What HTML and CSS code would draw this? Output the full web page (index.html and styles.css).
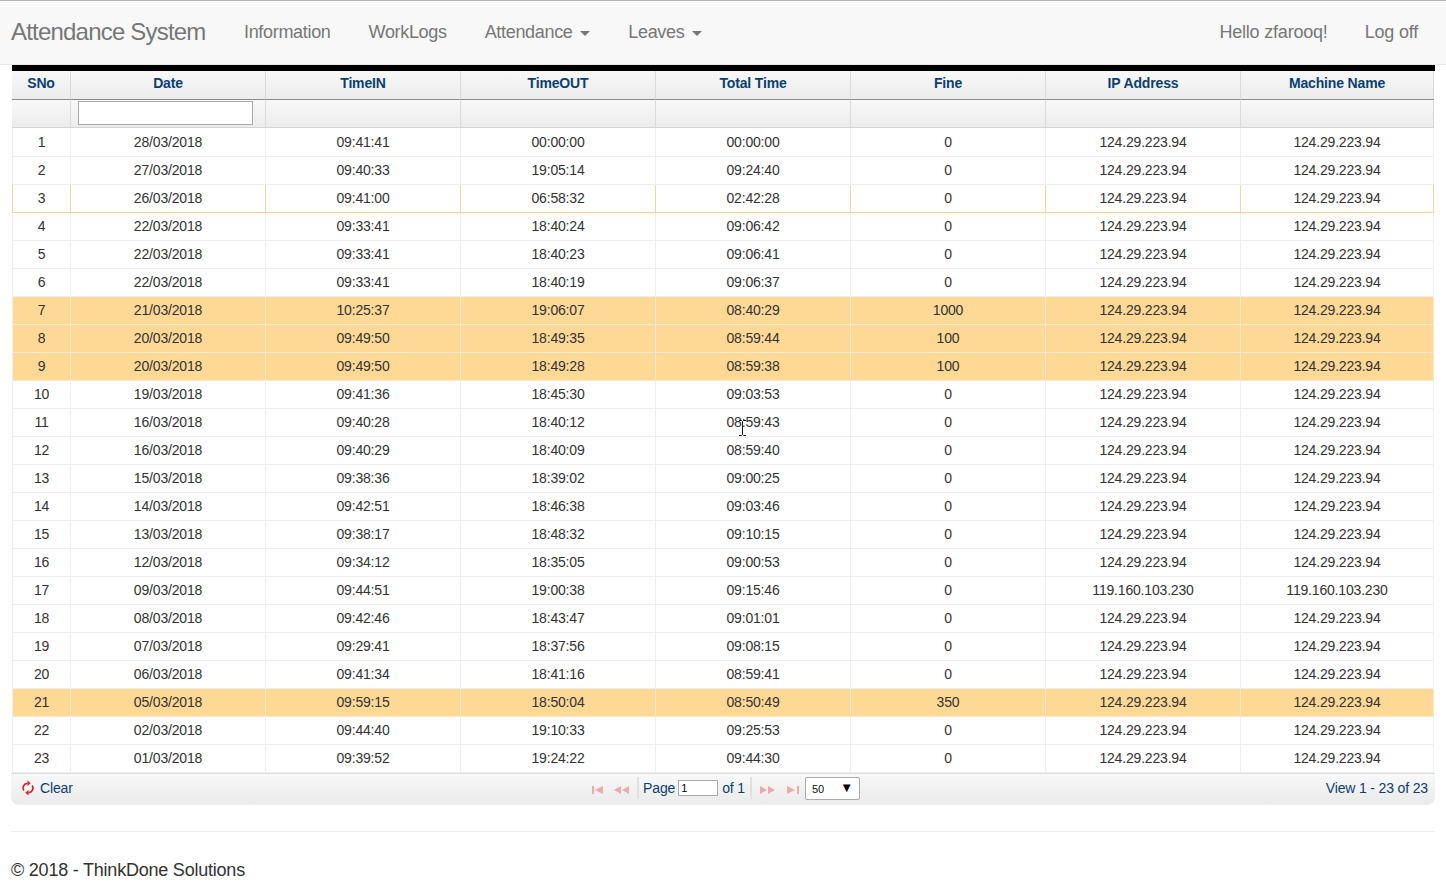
FILE: index.html
```html
<!DOCTYPE html>
<html lang="en">
<head>
    <meta charset="UTF-8">
    <title>Attendance System</title>
    <link rel="stylesheet" href="styles.css">
</head>
<body>
    <nav class="navbar">
        <a class="brand">Attendance System</a>
        <ul class="nav-links">
            <li>Information</li>
            <li>WorkLogs</li>
            <li>Attendance <span class="caret"></span></li>
            <li>Leaves <span class="caret"></span></li>
        </ul>
        <ul class="nav-links nav-right">
            <li>Hello zfarooq!</li>
            <li>Log off</li>
        </ul>
    </nav>

    <div class="grid-wrap">
        <div class="grid-top"></div>
        <table class="grid">
            <colgroup>
                <col class="col-sno"><col class="col-n"><col class="col-n"><col class="col-n">
                <col class="col-n"><col class="col-n"><col class="col-n"><col class="col-last">
            </colgroup>
            <thead>
                <tr class="head-row">
                    <th>SNo</th><th>Date</th><th>TimeIN</th><th>TimeOUT</th><th>Total Time</th><th>Fine</th><th>IP Address</th><th>Machine Name</th>
                </tr>
                <tr class="filter-row">
                    <th></th><th><input type="text" class="filter-input"></th><th></th><th></th><th></th><th></th><th></th><th></th>
                </tr>
            </thead>
            <tbody>
                <tr class="first"><td>1</td><td>28/03/2018</td><td>09:41:41</td><td>00:00:00</td><td>00:00:00</td><td>0</td><td>124.29.223.94</td><td>124.29.223.94</td></tr>
                <tr><td>2</td><td>27/03/2018</td><td>09:40:33</td><td>19:05:14</td><td>09:24:40</td><td>0</td><td>124.29.223.94</td><td>124.29.223.94</td></tr>
                <tr class="selected"><td>3</td><td>26/03/2018</td><td>09:41:00</td><td>06:58:32</td><td>02:42:28</td><td>0</td><td>124.29.223.94</td><td>124.29.223.94</td></tr>
                <tr><td>4</td><td>22/03/2018</td><td>09:33:41</td><td>18:40:24</td><td>09:06:42</td><td>0</td><td>124.29.223.94</td><td>124.29.223.94</td></tr>
                <tr><td>5</td><td>22/03/2018</td><td>09:33:41</td><td>18:40:23</td><td>09:06:41</td><td>0</td><td>124.29.223.94</td><td>124.29.223.94</td></tr>
                <tr><td>6</td><td>22/03/2018</td><td>09:33:41</td><td>18:40:19</td><td>09:06:37</td><td>0</td><td>124.29.223.94</td><td>124.29.223.94</td></tr>
                <tr class="late"><td>7</td><td>21/03/2018</td><td>10:25:37</td><td>19:06:07</td><td>08:40:29</td><td>1000</td><td>124.29.223.94</td><td>124.29.223.94</td></tr>
                <tr class="late"><td>8</td><td>20/03/2018</td><td>09:49:50</td><td>18:49:35</td><td>08:59:44</td><td>100</td><td>124.29.223.94</td><td>124.29.223.94</td></tr>
                <tr class="late"><td>9</td><td>20/03/2018</td><td>09:49:50</td><td>18:49:28</td><td>08:59:38</td><td>100</td><td>124.29.223.94</td><td>124.29.223.94</td></tr>
                <tr><td>10</td><td>19/03/2018</td><td>09:41:36</td><td>18:45:30</td><td>09:03:53</td><td>0</td><td>124.29.223.94</td><td>124.29.223.94</td></tr>
                <tr><td>11</td><td>16/03/2018</td><td>09:40:28</td><td>18:40:12</td><td>08:59:43</td><td>0</td><td>124.29.223.94</td><td>124.29.223.94</td></tr>
                <tr><td>12</td><td>16/03/2018</td><td>09:40:29</td><td>18:40:09</td><td>08:59:40</td><td>0</td><td>124.29.223.94</td><td>124.29.223.94</td></tr>
                <tr><td>13</td><td>15/03/2018</td><td>09:38:36</td><td>18:39:02</td><td>09:00:25</td><td>0</td><td>124.29.223.94</td><td>124.29.223.94</td></tr>
                <tr><td>14</td><td>14/03/2018</td><td>09:42:51</td><td>18:46:38</td><td>09:03:46</td><td>0</td><td>124.29.223.94</td><td>124.29.223.94</td></tr>
                <tr><td>15</td><td>13/03/2018</td><td>09:38:17</td><td>18:48:32</td><td>09:10:15</td><td>0</td><td>124.29.223.94</td><td>124.29.223.94</td></tr>
                <tr><td>16</td><td>12/03/2018</td><td>09:34:12</td><td>18:35:05</td><td>09:00:53</td><td>0</td><td>124.29.223.94</td><td>124.29.223.94</td></tr>
                <tr><td>17</td><td>09/03/2018</td><td>09:44:51</td><td>19:00:38</td><td>09:15:46</td><td>0</td><td>119.160.103.230</td><td>119.160.103.230</td></tr>
                <tr><td>18</td><td>08/03/2018</td><td>09:42:46</td><td>18:43:47</td><td>09:01:01</td><td>0</td><td>124.29.223.94</td><td>124.29.223.94</td></tr>
                <tr><td>19</td><td>07/03/2018</td><td>09:29:41</td><td>18:37:56</td><td>09:08:15</td><td>0</td><td>124.29.223.94</td><td>124.29.223.94</td></tr>
                <tr><td>20</td><td>06/03/2018</td><td>09:41:34</td><td>18:41:16</td><td>08:59:41</td><td>0</td><td>124.29.223.94</td><td>124.29.223.94</td></tr>
                <tr class="late"><td>21</td><td>05/03/2018</td><td>09:59:15</td><td>18:50:04</td><td>08:50:49</td><td>350</td><td>124.29.223.94</td><td>124.29.223.94</td></tr>
                <tr><td>22</td><td>02/03/2018</td><td>09:44:40</td><td>19:10:33</td><td>09:25:53</td><td>0</td><td>124.29.223.94</td><td>124.29.223.94</td></tr>
                <tr><td>23</td><td>01/03/2018</td><td>09:39:52</td><td>19:24:22</td><td>09:44:30</td><td>0</td><td>124.29.223.94</td><td>124.29.223.94</td></tr>
            </tbody>
        </table>

        <div class="pager">
            <div class="pager-left">
                <svg class="refresh-icon" width="14" height="16" viewBox="0 0 14 16" fill="none" stroke="#d8232a" stroke-width="1.7">
                    <path d="M2.800 10.500A4.600 4.600 0 0 1 6.500 3.300"/>
                    <path d="M11.200 5.500A4.600 4.600 0 0 1 7.500 12.700"/>
                    <path d="M6.500 0.500l3.200 2.800-3.200 2.800z" fill="#d8232a" stroke="none"/>
                    <path d="M7.500 9.900l-3.200 2.800 3.200 2.800z" fill="#d8232a" stroke="none"/>
                </svg>
                <span>Clear</span>
            </div>
            <div class="pager-center">
                <svg class="pg-icon pg-first" width="12" height="8" viewBox="0 0 12 8"><path d="M0 0h2v8H0zM11 0v8L3 4z"/></svg>
                <svg class="pg-icon pg-prev" width="15" height="8" viewBox="0 0 15 8"><path d="M7 0v8L0 4zM15 0v8L8 4z"/></svg>
                <span class="pg-sep"></span>
                <span>Page</span>
                <input type="text" class="page-input" value="1">
                <span>of 1</span>
                <span class="pg-sep pg-sep-right"></span>
                <svg class="pg-icon pg-next" width="15" height="8" viewBox="0 0 15 8"><path d="M0 0v8l7-4zM8 0v8l7-4z"/></svg>
                <svg class="pg-icon pg-last" width="12" height="8" viewBox="0 0 12 8"><path d="M0 0v8l8-4zM10 0h2v8h-2z"/></svg>
                <div class="size-select">50<span class="size-arrow">▼</span></div>
            </div>
            <div class="pager-right">View 1 - 23 of 23</div>
        </div>
    </div>

    <svg class="text-cursor" width="9" height="16" viewBox="0 0 9 16" fill="none" stroke="#111" stroke-width="1">
        <path d="M1 .5h2.500l1 1 1-1H8M4.500 1.500v13M1 15.500h2.500l1-1 1 1H8"/>
    </svg>

    <footer class="page-footer">
        <hr>
        <p>© 2018 - ThinkDone Solutions</p>
    </footer>
</body>
</html>
```

FILE: styles.css
```css
body {
    font-family: "Liberation Sans", Arial, sans-serif;
    font-size: 14px;
    color: #333;
    margin: 0;
    padding: 0;
    background-color: #fff;
}

.navbar {
    display: flex;
    align-items: center;
    height: 63px;
    padding-left: 11px;
    background-color: #f8f8f8;
    border-top: 1px solid #b4b4b4;
    border-bottom: 1px solid #e7e7e7;
    color: #777;
}

.brand {
    font-size: 24px;
    letter-spacing: -0.8px;
    width: 195px;
    margin-bottom: 2px;
    white-space: nowrap;
}

.nav-links {
    display: flex;
    list-style: none;
    margin: 0 0 0 38px;
    padding: 0;
    gap: 38px;
    font-size: 18px;
    letter-spacing: -0.32px;
}

.nav-right {
    margin-left: auto;
    margin-right: 28px;
    gap: 37px;
    letter-spacing: -0.2px;
}

.caret {
    display: inline-block;
    width: 0;
    height: 0;
    margin-left: 3px;
    vertical-align: middle;
    border-top: 5px solid #777;
    border-left: 5px solid transparent;
    border-right: 5px solid transparent;
}

.grid-wrap {
    width: 1423px;
    margin-left: 12px;
}

.grid-top {
    height: 6px;
    background-color: #000;
}

.grid {
    width: 1422px;
    table-layout: fixed;
    border-spacing: 0;
    background-color: #fff;
}

.col-sno { width: 59px; }
.col-n { width: 195px; }
.col-last { width: 193px; }

.grid th {
    background: linear-gradient(#f8f8f8, #ececec);
    border-right: 1px solid #d8dade;
    padding: 0;
    text-align: center;
}

.head-row th {
    height: 23px;
    padding-bottom: 5px;
    border-bottom: 1px solid #8a8a8a;
    color: #0b3f73;
    font-weight: bold;
    font-size: 14px;
    letter-spacing: -0.15px;
}

.filter-row th {
    height: 27px;
    border-bottom: 1px solid #d4d4d4;
}

.filter-input {
    display: block;
    box-sizing: border-box;
    width: 175px;
    height: 24px;
    margin: 0 0 2px 7px;
    border: 1px solid #aaa;
    background-color: #fff;
    padding: 0 2px;
}

.grid td {
    height: 26px;
    padding: 0 0 1px;
    text-align: center;
    letter-spacing: -0.18px;
    border-right: 1px solid #eee;
    border-bottom: 1px solid #eee;
}

.grid td:first-child {
    border-left: 1px solid #eee;
}

.grid tr.first td {
    height: 28px;
    padding-bottom: 0;
}

.grid tr.late td {
    background-color: #fed895;
    border-color: #f6e9d2;
}

.grid tr.late td:first-child {
    border-left-color: #eee;
}

.grid tr.selected td {
    border-bottom-color: #fdd39a;
    border-right-color: #fdd39a;
}

.grid tr.selected td:first-child {
    border-left-color: #fdd39a;
}

.pager {
    display: grid;
    grid-template-columns: 1fr auto 1fr;
    align-items: center;
    height: 28px;
    padding-bottom: 1px;
    margin-left: -1px;
    width: 1424px;
    background: linear-gradient(#f8f8f8, #ebebeb);
    border-top: 1px solid #ddd;
    border-bottom: 2px solid #eee;
    border-radius: 0 0 8px 8px;
    color: #0b3f73;
    letter-spacing: -0.15px;
}

.pager-left {
    display: flex;
    align-items: center;
    gap: 5px;
    padding-left: 10px;
}

.pager-center {
    display: flex;
    align-items: center;
    padding-left: 6px;
}

.pager-right {
    text-align: right;
    padding-right: 7px;
}

.pg-icon {
    fill: #eea9a9;
    margin-top: 3px;
}

.pg-first { margin-right: 10px; }
.pg-prev { margin-right: 8px; }
.pg-next { margin-right: 12px; }
.pg-last { margin-right: 6px; }

.pg-sep {
    width: 2px;
    height: 22px;
    background-color: #e0e0e0;
    margin-right: 4px;
}

.pg-sep-right {
    margin-left: 5px;
    margin-right: 8px;
}

.page-input {
    box-sizing: border-box;
    width: 40px;
    height: 16px;
    margin: 0 4px 0 3px;
    padding: 0 2px;
    border: 1px solid #aaa;
    font-family: inherit;
    font-size: 11px;
}

.size-select {
    position: relative;
    box-sizing: border-box;
    width: 55px;
    height: 23px;
    line-height: 22px;
    padding-left: 6px;
    border: 1px solid #aaa;
    border-radius: 2px;
    background-color: #fff;
    font-size: 11px;
    color: #111;
}

.size-arrow {
    position: absolute;
    right: 6px;
    top: -1px;
    font-size: 13px;
    color: #000;
}

.text-cursor {
    position: absolute;
    left: 738px;
    top: 420px;
}

.page-footer {
    margin: 0 11px;
}

.page-footer hr {
    margin: 26px 0 0;
    border: 0;
    border-top: 1px solid #eee;
}

.page-footer p {
    margin: 28px 0 0;
    font-size: 18px;
    letter-spacing: -0.22px;
    color: #333;
}
```
